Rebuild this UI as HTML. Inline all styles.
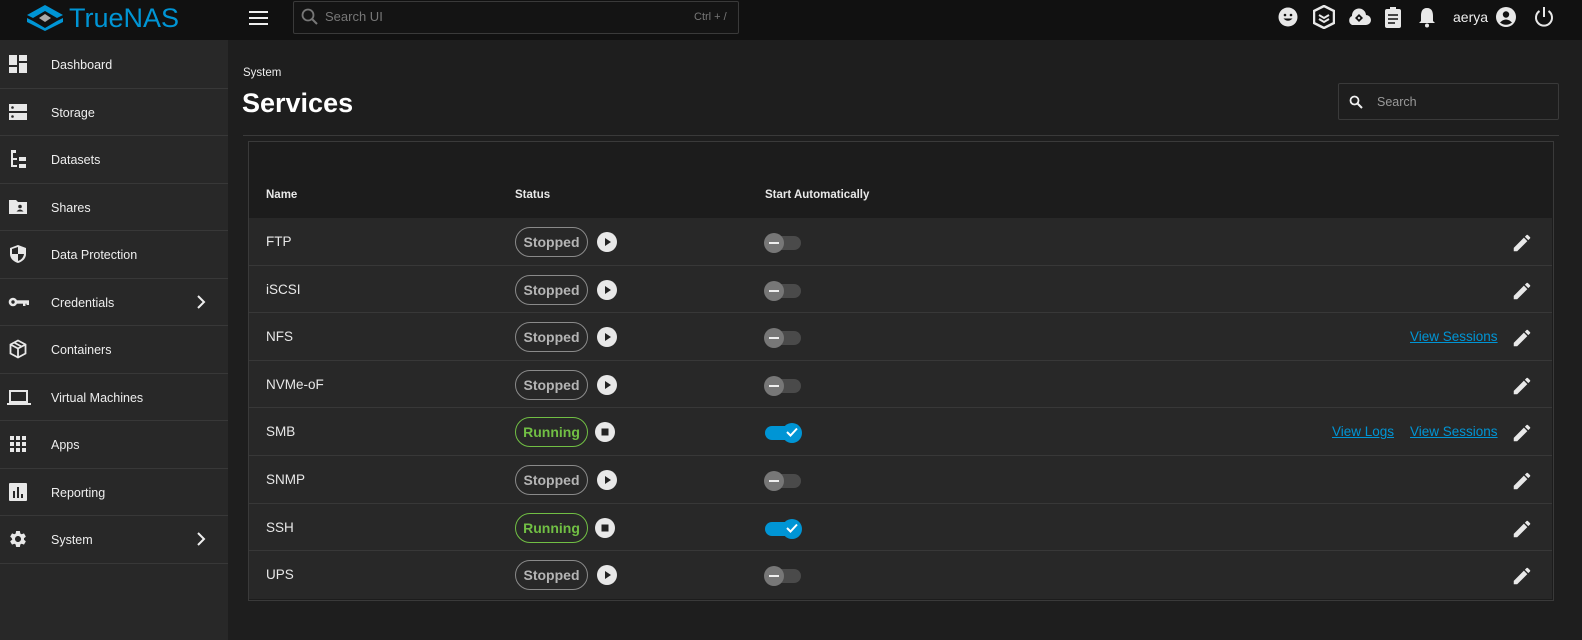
<!DOCTYPE html>
<html><head><meta charset="utf-8"><style>
*{box-sizing:border-box;margin:0;padding:0}
body{width:1582px;height:640px;background:#1e1e1e;font-family:"Liberation Sans",sans-serif;color:#e8e8e8;position:relative;overflow:hidden}
.abs{position:absolute}
.top{left:0;top:0;width:1582px;height:40px;background:#111}
.side{left:0;top:40px;width:228px;height:600px;background:#282828}
.nav{position:absolute;left:0;width:228px;height:47.5px;border-bottom:1px solid #383838;font-size:12.5px;color:#eee}
.nav span{position:absolute;left:51px;top:17px}
.nav svg{position:absolute;left:8px;top:13px}
.nav .chev{left:196px;top:15px}
.row{position:absolute;left:249px;width:1303px;height:47.6px;background:#282828;border-bottom:1px solid #383838;font-size:13.5px}
.row .n{position:absolute;left:17px;top:16px}
.pill{position:absolute;left:266px;top:9px;width:73px;height:30px;border:1px solid #8a8a8a;border-radius:15px;color:#b5b5b5;font-weight:bold;font-size:14px;text-align:center;line-height:28px}
.pill.run{border-color:#71bf44;color:#71bf44}
.btn{position:absolute;left:348px;top:14px;width:20px;height:20px;border-radius:50%;background:#e8e8e8}
.tg{position:absolute;left:516px;top:18px;width:36px;height:14px;border-radius:7px;background:#4a4a4a}
.tg i{position:absolute;left:-1px;top:-3px;width:20px;height:20px;border-radius:50%;background:#777}
.tg i:after{content:"";position:absolute;left:5px;top:9px;width:10px;height:2px;background:#eee}
.tg.on{background:#0095d5}
.tg.on i{left:17px;background:#0095d5}
.tg.on i:after{display:none}
.pen{position:absolute;left:1262px;top:14px}
.lnk{position:absolute;top:16px;color:#0095d5;text-decoration:underline;font-size:13.5px}
</style></head><body>
<div class="abs top"></div>
<svg class="abs" style="left:27px;top:5px" width="36" height="26" viewBox="0 0 36 26"><path d="M18 0 L36 10 L30 13 L18 6 L6 13 L0 10Z" fill="#0095d5"/><path d="M0 13 L6 16 L18 23 L30 16 L36 13 L36 17 L18 26 L0 17Z" fill="#0095d5"/><path d="M18 9 L24 13 L18 17 L12 13Z" fill="#aaa"/></svg>
<div class="abs" style="left:69px;top:3px;font-size:27px;color:#0095d5">TrueNAS</div>
<div class="abs" style="left:249px;top:11px;width:19px;height:2px;background:#eee;box-shadow:0 6px #eee,0 12px #eee"></div>
<div class="abs" style="left:293px;top:1px;width:446px;height:33px;border:1px solid #3a3a3a;border-radius:2px;background:#141414"></div>
<svg class="abs" style="left:301px;top:8px" width="18" height="18" viewBox="0 0 18 18"><circle cx="7" cy="7" r="5.5" stroke="#777" stroke-width="1.8" fill="none"/><path d="M11 11 L16 16" stroke="#777" stroke-width="2"/></svg>
<div class="abs" style="left:325px;top:9px;font-size:13px;color:#777">Search UI</div>
<div class="abs" style="left:694px;top:11px;font-size:11px;color:#777">Ctrl + /</div>
<!-- top right icons -->
<svg class="abs" style="left:1278px;top:7px" width="20" height="20" viewBox="0 0 20 20"><circle cx="10" cy="10" r="9.5" fill="#e8e8e8"/><circle cx="7" cy="8" r="1.3" fill="#111"/><circle cx="13" cy="8" r="1.3" fill="#111"/><path d="M5.5 11.5 Q10 16 14.5 11.5Z" fill="#111"/></svg>
<svg class="abs" style="left:1313px;top:5px" width="22" height="24" viewBox="0 0 22 24"><path d="M11 1 L21 6 L21 18 L11 23 L1 18 L1 6Z" fill="none" stroke="#e8e8e8" stroke-width="2.5"/><path d="M6 10 L11 13 L16 10 M6 14 L11 17 L16 14" stroke="#e8e8e8" stroke-width="2" fill="none"/></svg>
<svg class="abs" style="left:1347px;top:8px" width="24" height="18" viewBox="0 0 24 18"><path d="M5 17 A5 5 0 0 1 5 8 A7 7 0 0 1 19 7 A5 5 0 0 1 19 17Z" fill="#e8e8e8"/><path d="M12 6 L16 10 L12 14 L8 10Z" fill="#111"/><path d="M12 8.5 L13.5 10 L12 11.5 L10.5 10Z" fill="#e8e8e8"/></svg>
<svg class="abs" style="left:1384px;top:6px" width="18" height="22" viewBox="0 0 18 22"><rect x="1" y="3" width="16" height="19" rx="2" fill="#e8e8e8"/><rect x="6" y="1" width="6" height="4" fill="#e8e8e8"/><path d="M4 9h10M4 13h10M4 17h7" stroke="#111" stroke-width="1.6"/></svg>
<svg class="abs" style="left:1418px;top:6px" width="18" height="22" viewBox="0 0 18 22"><path d="M9 2 C4 2 3 6 3 10 L3 15 L1 17 L17 17 L15 15 L15 10 C15 6 14 2 9 2Z" fill="#e8e8e8"/><circle cx="9" cy="19.5" r="2" fill="#e8e8e8"/></svg>
<div class="abs" style="left:1453px;top:9px;font-size:14px;color:#eee">aerya</div>
<svg class="abs" style="left:1496px;top:7px" width="20" height="20" viewBox="0 0 20 20"><circle cx="10" cy="10" r="10" fill="#e8e8e8"/><circle cx="10" cy="7.5" r="3.2" fill="#111"/><path d="M4 15.5 Q10 9.5 16 15.5 Q10 20 4 15.5Z" fill="#111"/></svg>
<svg class="abs" style="left:1533px;top:6px" width="22" height="22" viewBox="0 0 22 22"><path d="M6.5 5 A8 8 0 1 0 15.5 5" stroke="#e8e8e8" stroke-width="2" fill="none"/><path d="M11 1 V11" stroke="#e8e8e8" stroke-width="2"/></svg>

<div class="abs side"></div>
<div class="nav" style="top:41px"><svg width="20" height="20" viewBox="0 0 20 20" fill="#e8e8e8"><rect x="1" y="1" width="8" height="10"/><rect x="11" y="1" width="8" height="6"/><rect x="1" y="13" width="8" height="6"/><rect x="11" y="9" width="8" height="10"/></svg><span>Dashboard</span></div>
<div class="nav" style="top:88.5px"><svg width="20" height="20" viewBox="0 0 20 20"><rect x="1" y="2" width="18" height="7" fill="#e8e8e8"/><rect x="1" y="11" width="18" height="7" fill="#e8e8e8"/><circle cx="4.5" cy="5.5" r="1.3" fill="#282828"/><circle cx="4.5" cy="14.5" r="1.3" fill="#282828"/></svg><span>Storage</span></div>
<div class="nav" style="top:136px"><svg width="20" height="20" viewBox="0 0 20 20" fill="#e8e8e8"><rect x="3" y="1" width="5" height="3"/><rect x="3" y="4" width="2" height="14"/><rect x="3" y="9" width="6" height="2"/><rect x="3" y="16" width="6" height="2"/><rect x="11" y="8" width="7" height="4"/><rect x="11" y="15" width="7" height="4"/></svg><span>Datasets</span></div>
<div class="nav" style="top:183.5px"><svg width="20" height="20" viewBox="0 0 20 20"><path d="M1 3 H8 L10 5 H19 V17 H1Z" fill="#e8e8e8"/><circle cx="12" cy="9.5" r="1.8" fill="#282828"/><path d="M8.5 14.5 Q12 10.5 15.5 14.5Z" fill="#282828"/></svg><span>Shares</span></div>
<div class="nav" style="top:231px"><svg width="20" height="20" viewBox="0 0 20 20"><path d="M10 1 L18 4 V10 C18 14 15 17.5 10 19 C5 17.5 2 14 2 10 V4Z" fill="#e8e8e8"/><path d="M10 3 V10 H4 V5 L10 3Z M10 10 H16 C15.5 13.5 13 16 10 17Z" fill="#282828"/></svg><span>Data Protection</span></div>
<div class="nav" style="top:278.5px"><svg width="22" height="20" viewBox="0 0 22 20"><circle cx="5" cy="10" r="4.3" fill="#e8e8e8"/><circle cx="5" cy="10" r="1.7" fill="#282828"/><rect x="8" y="8.3" width="13" height="3.4" fill="#e8e8e8"/><rect x="15" y="10" width="2.5" height="4" fill="#e8e8e8"/><rect x="18.5" y="10" width="2.5" height="3" fill="#e8e8e8"/></svg><span>Credentials</span><svg class="chev" width="10" height="16" viewBox="0 0 10 16"><path d="M2 2 L8 8 L2 14" stroke="#eee" stroke-width="2" fill="none"/></svg></div>
<div class="nav" style="top:326px"><svg width="20" height="20" viewBox="0 0 20 20" fill="none" stroke="#e8e8e8" stroke-width="1.8"><path d="M10 1.5 L17.5 5.5 V14.5 L10 18.5 L2.5 14.5 V5.5Z M2.5 5.5 L10 9.5 L17.5 5.5 M10 9.5 V18.5 M6 3.5 L13.5 7.5"/></svg><span>Containers</span></div>
<div class="nav" style="top:373.5px"><svg width="24" height="20" viewBox="0 0 24 20" style="left:7px"><rect x="3" y="4" width="17" height="11" fill="none" stroke="#e8e8e8" stroke-width="2"/><rect x="0" y="16" width="24" height="2" fill="#e8e8e8"/></svg><span>Virtual Machines</span></div>
<div class="nav" style="top:421px"><svg width="20" height="20" viewBox="0 0 20 20" fill="#e8e8e8"><rect x="2" y="2" width="4" height="4"/><rect x="8" y="2" width="4" height="4"/><rect x="14" y="2" width="4" height="4"/><rect x="2" y="8" width="4" height="4"/><rect x="8" y="8" width="4" height="4"/><rect x="14" y="8" width="4" height="4"/><rect x="2" y="14" width="4" height="4"/><rect x="8" y="14" width="4" height="4"/><rect x="14" y="14" width="4" height="4"/></svg><span>Apps</span></div>
<div class="nav" style="top:468.5px"><svg width="20" height="20" viewBox="0 0 20 20"><rect x="1" y="1" width="18" height="18" rx="1" fill="#e8e8e8"/><rect x="5" y="9" width="2" height="7" fill="#282828"/><rect x="9" y="5" width="2" height="11" fill="#282828"/><rect x="13" y="12" width="2" height="4" fill="#282828"/></svg><span>Reporting</span></div>
<div class="nav" style="top:516px"><svg width="20" height="20" viewBox="0 0 24 24"><path fill="#e8e8e8" d="M19.14 12.94c.04-.3.06-.61.06-.94 0-.32-.02-.64-.07-.94l2.03-1.58a.49.49 0 0 0 .12-.61l-1.92-3.32a.49.49 0 0 0-.59-.22l-2.39.96c-.5-.38-1.03-.7-1.62-.94l-.36-2.54a.48.48 0 0 0-.48-.41h-3.84c-.24 0-.43.17-.47.41l-.36 2.54c-.59.24-1.13.57-1.62.94l-2.39-.96c-.22-.08-.47 0-.59.22L2.74 8.87c-.12.21-.08.47.12.61l2.03 1.58c-.05.3-.9.63-.09.94s.2.64.07.94l-2.03 1.58a.49.49 0 0 0-.12.61l1.92 3.32c.12.22.37.29.59.22l2.39-.96c.5.38 1.03.7 1.62.94l.36 2.54c.5.24.24.41.48.41h3.84c.24 0 .44-.17.47-.41l.36-2.54c.59-.24 1.13-.56 1.62-.94l2.39.96c.22.08.47 0 .59-.22l1.92-3.32c.12-.22.07-.47-.12-.61l-2.01-1.58zM12 15.6c-1.98 0-3.6-1.62-3.6-3.6s1.62-3.6 3.6-3.6 3.6 1.62 3.6 3.6-1.62 3.6-3.6 3.6z"/></svg><span>System</span><svg class="chev" width="10" height="16" viewBox="0 0 10 16"><path d="M2 2 L8 8 L2 14" stroke="#eee" stroke-width="2" fill="none"/></svg></div>

<div class="abs" style="left:243px;top:67px;font-size:11.5px;color:#eee">System</div>
<div class="abs" style="left:242px;top:88px;font-size:27px;font-weight:bold;color:#fff">Services</div>
<div class="abs" style="left:243px;top:135px;width:1316px;height:1px;background:#3a3a3a"></div>
<div class="abs" style="left:1338px;top:83px;width:221px;height:37px;border:1px solid #3a3a3a;border-radius:2px"></div>
<svg class="abs" style="left:1349px;top:95px" width="14" height="14" viewBox="0 0 14 14"><circle cx="5.5" cy="5.5" r="4" stroke="#eee" stroke-width="1.8" fill="none"/><path d="M8.5 8.5 L13 13" stroke="#eee" stroke-width="2"/></svg>
<div class="abs" style="left:1377px;top:95px;font-size:12.5px;color:#999">Search</div>

<div class="abs" style="left:248px;top:141px;width:1306px;height:460px;border:1px solid #3a3a3a;background:#1c1c1c"></div>
<div class="abs" style="left:266px;top:189px;font-size:11.5px;font-weight:bold">Name</div>
<div class="abs" style="left:515px;top:189px;font-size:11.5px;font-weight:bold">Status</div>
<div class="abs" style="left:765px;top:189px;font-size:11.5px;font-weight:bold">Start Automatically</div>

<svg width="0" height="0" style="position:absolute"><defs>
<symbol id="pen" viewBox="0 0 24 24"><path fill="#e8e8e8" d="M3 17.25V21h3.75L17.81 9.94l-3.75-3.75L3 17.25zM20.71 7.04a1 1 0 0 0 0-1.41l-2.34-2.34a1 1 0 0 0-1.41 0l-1.83 1.83 3.75 3.75 1.83-1.83z"/></symbol>
<symbol id="play" viewBox="0 0 20 20"><circle cx="10" cy="10" r="10" fill="#e8e8e8"/><path d="M8 6 L14 10 L8 14Z" fill="#222"/></symbol>
<symbol id="stop" viewBox="0 0 20 20"><circle cx="10" cy="10" r="10" fill="#e8e8e8"/><rect x="6.5" y="6.5" width="7" height="7" fill="#222"/></symbol>
</defs></svg>

<div class="row" style="top:218px"><div class="n">FTP</div><div class="pill">Stopped</div><svg class="abs" style="left:348px;top:14px" width="20" height="20"><use href="#play"/></svg><div class="tg"><i></i></div><svg class="pen" width="22" height="22"><use href="#pen"/></svg></div>
<div class="row" style="top:265.6px"><div class="n">iSCSI</div><div class="pill">Stopped</div><svg class="abs" style="left:348px;top:14px" width="20" height="20"><use href="#play"/></svg><div class="tg"><i></i></div><svg class="pen" width="22" height="22"><use href="#pen"/></svg></div>
<div class="row" style="top:313.2px"><div class="n">NFS</div><div class="pill">Stopped</div><svg class="abs" style="left:348px;top:14px" width="20" height="20"><use href="#play"/></svg><div class="tg"><i></i></div><a class="lnk" style="left:1161px">View Sessions</a><svg class="pen" width="22" height="22"><use href="#pen"/></svg></div>
<div class="row" style="top:360.8px"><div class="n">NVMe-oF</div><div class="pill">Stopped</div><svg class="abs" style="left:348px;top:14px" width="20" height="20"><use href="#play"/></svg><div class="tg"><i></i></div><svg class="pen" width="22" height="22"><use href="#pen"/></svg></div>
<div class="row" style="top:408.4px"><div class="n">SMB</div><div class="pill run">Running</div><svg class="abs" style="left:346px;top:14px" width="20" height="20"><use href="#stop"/></svg><div class="tg on"><i></i><svg class="abs" style="left:20px;top:-1px" width="14" height="14" viewBox="0 0 14 14"><path d="M2 7 L5.5 10.5 L12 3.5" stroke="#fff" stroke-width="2" fill="none"/></svg></div><a class="lnk" style="left:1083px">View Logs</a><a class="lnk" style="left:1161px">View Sessions</a><svg class="pen" width="22" height="22"><use href="#pen"/></svg></div>
<div class="row" style="top:456px"><div class="n">SNMP</div><div class="pill">Stopped</div><svg class="abs" style="left:348px;top:14px" width="20" height="20"><use href="#play"/></svg><div class="tg"><i></i></div><svg class="pen" width="22" height="22"><use href="#pen"/></svg></div>
<div class="row" style="top:503.6px"><div class="n">SSH</div><div class="pill run">Running</div><svg class="abs" style="left:346px;top:14px" width="20" height="20"><use href="#stop"/></svg><div class="tg on"><i></i><svg class="abs" style="left:20px;top:-1px" width="14" height="14" viewBox="0 0 14 14"><path d="M2 7 L5.5 10.5 L12 3.5" stroke="#fff" stroke-width="2" fill="none"/></svg></div><svg class="pen" width="22" height="22"><use href="#pen"/></svg></div>
<div class="row" style="top:551.2px;border-bottom:none"><div class="n">UPS</div><div class="pill">Stopped</div><svg class="abs" style="left:348px;top:14px" width="20" height="20"><use href="#play"/></svg><div class="tg"><i></i></div><svg class="pen" width="22" height="22"><use href="#pen"/></svg></div>
</body></html>
